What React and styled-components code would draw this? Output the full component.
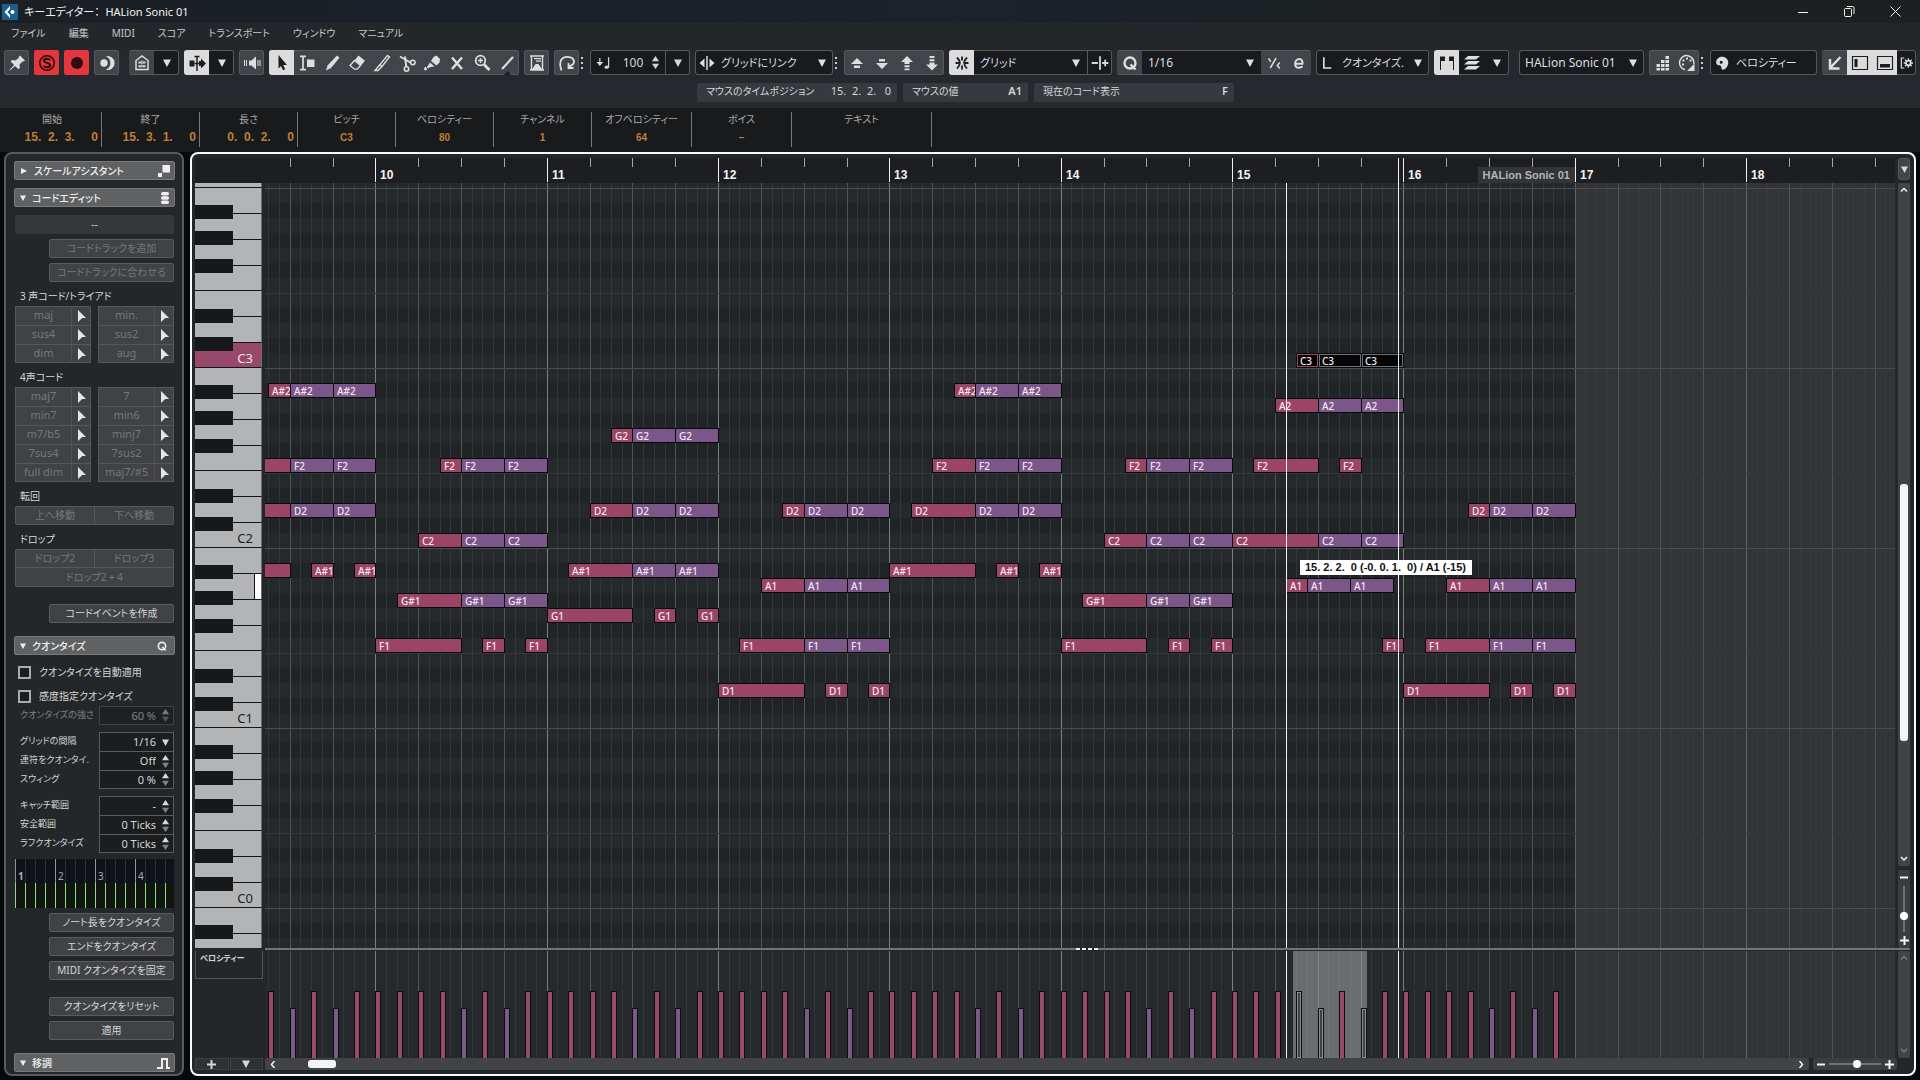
// src/App.jsx
import React, { useState } from 'react';
import styled, { createGlobalStyle, css } from 'styled-components';

const GlobalStyle = createGlobalStyle`
  * {
    box-sizing: border-box;
  }
  body {
    margin: 0;
    background: #060809;
    color: #d4d6d8;
    font-family: "Noto Sans", "Noto Sans CJK JP", sans-serif;
    font-feature-settings: "palt";
    font-size: 11px;
    line-height: 16px;
  }
  button, input, select {
    margin: 0;
    padding: 0;
    border: none;
    border-radius: 0;
    background: none;
    color: inherit;
    font: inherit;
    font-feature-settings: inherit;
    outline: none;
  }
  svg {
    display: block;
    flex: none;
  }
`;

const Page = styled.div`
  display: flex;
  flex-direction: column;
  height: 100vh;
  overflow: hidden;
`;

/* ---------- title and menu ---------- */

const TitleBar = styled.header`
  display: flex;
  align-items: center;
  gap: 6px;
  height: 23px;
  padding: 0 12px 0 2px;
  background: linear-gradient(90deg, #1a1f24, #1b222c 50%, #1c2020 75%);
`;

const Title = styled.h1`
  flex: 1;
  margin: 0;
  font-size: 11px;
  font-weight: 400;
  white-space: pre;
  color: #f2f2f2;
`;

const WindowButton = styled.button`
  display: grid;
  place-items: center;
  width: 46px;
  height: 22px;
  color: #f2f2f2;
`;

const WindowButtons = styled.div`
  display: flex;
  margin-right: -10px;
`;

const MenuBar = styled.nav`
  display: flex;
  gap: 23px;
  height: 27px;
  padding: 2px 11px 0;
  background: #24272a;
`;

const MenuItem = styled.button`
  height: 16px;
  font-size: 10px;
  white-space: nowrap;
  color: #c4c7ca;
`;

/* ---------- toolbar ---------- */

const Toolbar = styled.div`
  display: flex;
  gap: 5px;
  height: 33px;
  padding: 0 4px 8px;
  background: #25282c;
`;

const Group = styled.div`
  display: flex;
  flex: ${(p) => (p.$grow ? '1 1 0' : 'none')};
  width: ${(p) => (p.$width ? `${p.$width}px` : 'auto')};
  min-width: 0;
  height: 25px;
  margin-left: ${(p) => (p.$apart ? '5px' : '0')};
  border-radius: 3px;
  overflow: hidden;
  background: ${(p) => (p.$dark ? '#181a1d' : '#414448')};
  box-shadow: inset 0 0 0 1px #55585c;
`;

const tones = {
  on: css`
    background: #dcdcdc;
    color: #1c1d1f;
  `,
  red: css`
    background: #e4373d;
    color: #2c0c0e;
  `,
  raised: css`
    background: #414448;
    box-shadow: inset 0 1px #55585c, inset 0 -1px #55585c;
  `,
};

const ToolButton = styled.button`
  display: grid;
  place-items: center;
  flex: ${(p) => (p.$grow ? 1 : 'none')};
  width: 25px;
  min-width: 0;
  height: 25px;
  color: #dcdee0;
  ${(p) => tones[p.$tone]}
`;

const Grip = styled.span`
  width: 6px;
  height: 25px;
  flex: none;
  margin-left: -5px;
  padding: 7px 2px;

  &::before {
    content: "";
    display: block;
    width: 2px;
    height: 12px;
    background: repeating-linear-gradient(#c8cacc 0 2px, transparent 2px 5px);
  }
`;

const Picker = styled.label`
  display: flex;
  flex: 1;
  align-items: center;
  min-width: 0;
  gap: 4px;
  padding: 0 7px 0 ${(p) => p.$indent || 6}px;
  color: #dcdee0;

  select {
    flex: 1;
    min-width: 0;
    appearance: none;
    font-size: ${(p) => (p.$kana ? 11 : 12)}px;
  }
`;

const NumberBox = styled.label`
  display: flex;
  flex: 1;
  align-items: center;
  padding: 0 6px 0 4px;

  input {
    flex: 1;
    width: 20px;
    min-width: 0;
    text-align: center;
    font-size: 12px;
  }
`;

const SplitCell = styled.button`
  display: grid;
  place-items: center;
  width: 25px;
  height: 25px;
  border-left: 1px solid #55585c;
`;

const StatusLine = styled.div`
  display: flex;
  justify-content: center;
  gap: 6px;
  height: 25px;
  padding: 0 0 6px 11px;
  background: #25282c;
`;

const Pill = styled.div`
  display: flex;
  justify-content: space-between;
  width: ${(p) => p.$width}px;
  padding: 0 6px 0 9px;
  border-radius: 2px;
  background: #36393d;
  font-size: 10px;
  white-space: pre;

  b {
    font-size: 11px;
    font-weight: ${(p) => (p.$plain ? 400 : 600)};
  }
`;

/* ---------- info line ---------- */

const InfoLine = styled.div`
  display: flex;
  height: 44px;
  padding: 4px 0 5px 3px;
  background: #191a1c;
`;

const InfoField = styled.label`
  display: flex;
  flex-direction: column;
  align-items: stretch;
  width: ${(p) => p.$width}px;
  border-right: 1px solid #77797b;
  padding: 0 3px;
  font-size: 10px;
  line-height: 14px;
  text-align: center;
  color: #a7a9ab;

  input {
    width: 100%;
    height: 18px;
    margin-top: 2px;
    text-align: ${(p) => (p.$time ? 'right' : 'center')};
    font-family: "Liberation Sans", sans-serif;
    font-size: ${(p) => (p.$time ? 12 : 10)}px;
    font-weight: 700;
    color: #bf7f34;
  }
`;

/* ---------- inspector ---------- */

const Workspace = styled.main`
  display: flex;
  flex: 1;
  gap: 6px;
  min-height: 0;
  padding: 0 4px 4px;
`;

const Inspector = styled.aside`
  display: flex;
  flex-direction: column;
  width: 180px;
  flex: none;
  padding: 7px 6px 7px 7px;
  border: 2px solid #585b5e;
  border-radius: 8px;
  background: #23272a;
  font-size: 10px;
  overflow: hidden;
`;

const SectionHead = styled.button`
  display: flex;
  flex: none;
  align-items: center;
  gap: 6px;
  height: 19px;
  margin: 0 1px;
  margin-bottom: ${(p) => p.$gap || 8}px;
  padding: 0 4px 0 5px;
  border: 1px solid #77797b;
  border-radius: 2px;
  background: #5f6163;
  color: #eeeeee;
  font-weight: 500;

  span {
    flex: 1;
    text-align: left;
  }
`;

const SectionBody = styled.div`
  display: flex;
  flex-direction: column;
  margin: 0 2px;
`;

const ChordName = styled.output`
  height: 19px;
  margin-bottom: 5px;
  border-radius: 2px;
  background: #35373b;
  line-height: 18px;
  text-align: center;
`;

const SideButton = styled.button`
  flex: none;
  height: 19px;
  margin: 0 0 ${(p) => p.$gap || 5}px 34px;
  border: 1px solid #5a5d60;
  border-radius: 2px;
  background: #404246;
  line-height: 15px;
  white-space: nowrap;

  &:disabled {
    color: #75787b;
  }
`;

const SubTitle = styled.h2`
  height: 16px;
  margin: 0 0 3px;
  padding-left: 5px;
  font-size: 10px;
  font-weight: 400;
  line-height: 18px;
`;

const ChordColumns = styled.div`
  display: grid;
  grid-template-columns: 1fr 1fr;
  column-gap: 7px;
  margin-bottom: 5px;
`;

const ChordRow = styled.div`
  display: flex;
  height: 19px;
  border: 1px solid #55585b;
  border-bottom-width: ${(p) => (p.$last ? '1px' : '0')};
  background: #404246;
  font-size: 11px;
`;

const ChordButton = styled.button`
  flex: 1;
  padding-bottom: 2px;
  line-height: 14px;
  border-right: 1px solid #4d5053;

  &:disabled {
    color: #75787b;
  }
`;

const DragButton = styled.button`
  display: grid;
  place-items: center;
  width: 18px;
  color: #e4e5e6;
`;

const MoveGrid = styled.div`
  display: grid;
  grid-template-columns: 1fr 1fr;
  gap: 1px;
  margin-bottom: ${(p) => p.$gap}px;
  border: 1px solid #55585b;
  border-radius: 2px;
  background: #55585b;
`;

const MoveButton = styled.button`
  grid-column: ${(p) => (p.$wide ? '1 / -1' : 'auto')};
  height: ${(p) => (p.$wide ? 18 : 17)}px;
  background: #404246;
  line-height: 15px;

  &:disabled {
    color: #75787b;
  }
`;

const CheckRow = styled.label`
  display: flex;
  align-items: center;
  gap: 8px;
  height: 20px;
  margin-bottom: ${(p) => p.$gap}px;
  padding-left: 3px;

  input {
    appearance: none;
    width: 13px;
    height: 13px;
    border: 2px solid #a9abad;
    background: #1b1d1f;
  }
`;

const FieldGroup = styled.div`
  margin-bottom: ${(p) => p.$gap || 7}px;
  opacity: ${(p) => (p.$dim ? 0.5 : 1)};
`;

const Field = styled.label`
  display: flex;
  height: 19px;
  padding-left: 5px;
  font-size: 9px;
  line-height: 18px;
  white-space: nowrap;

  > span:first-child {
    flex: 1;
    min-width: 0;
  }
`;

const FieldBox = styled.span`
  display: flex;
  align-items: center;
  width: 75px;
  height: 19px;
  padding-right: 4px;
  border: 1px solid #5a5d60;
  border-bottom-width: ${(p) => (p.$last ? '1px' : '0')};
  background: #1b1d1f;
  font-size: 11px;

  input, select {
    flex: 1;
    width: 40px;
    height: 16px;
    min-width: 0;
    padding: 0 6px 1px 0;
    appearance: none;
    line-height: 15px;
    text-align: right;
    text-align-last: right;
  }
`;

const QuantizeGrid = styled.div`
  flex: none;
  height: 49px;
  margin-bottom: 5px;
  background: linear-gradient(#0f1317 50%, #10160f 50%);
`;

/* ---------- editor ---------- */

const Editor = styled.section`
  display: grid;
  flex: 1;
  min-width: 0;
  grid-template-columns: 67px 1fr 12px;
  grid-template-rows: 25px 1fr 3px 107px 12px;
  column-gap: 3px;
  padding: 4px 4px 4px 3px;
  border: 2px solid #fafafa;
  border-radius: 8px;
  background: #23272a;
`;

const RulerCorner = styled.div`
  margin-right: -3px;
  background: #1d1e22;
`;

const Ruler = styled.div`
  position: relative;
  overflow: hidden;
  background: #1d1e22;
`;

const BarNumber = styled.span`
  position: absolute;
  top: 9px;
  font-family: "Liberation Sans", sans-serif;
  font-size: 12px;
  font-weight: 700;
  color: #f4f4f4;
`;

const PartTag = styled.span`
  position: absolute;
  top: 9px;
  height: 16px;
  padding-right: 5px;
  background: #323437;
  font-family: "Liberation Sans", sans-serif;
  font-size: 11px;
  font-weight: 700;
  text-align: right;
  white-space: nowrap;
  color: #b4b6b8;
`;

const RulerMenu = styled.button`
  display: grid;
  place-items: center;
  height: 22px;
  border: 1px solid #56595c;
  border-radius: 3px;
  background: #414448;
`;

const Keyboard = styled.div`
  display: flex;
  flex-direction: column;
  min-height: 0;
  overflow: hidden;
  background: #b2b4b6;
`;

const Octave = styled.div`
  position: relative;
  flex: none;
  height: 180px;

  &:first-child {
    margin-top: -175px;
  }
`;

const WhiteKey = styled.div`
  display: flex;
  align-items: flex-end;
  justify-content: flex-end;
  height: ${(p) => p.$height}px;
  padding-right: 8px;
  border-bottom: 1px solid #141517;
  border-right: 1px solid #6c6e70;
  background: ${(p) => (p.$active ? '#984868' : '#b2b4b6')};
  color: ${(p) => (p.$active ? '#f0e4ea' : '#1e2022')};
  font-size: 13px;
  line-height: 17px;
`;

const KeyMarker = styled.i`
  align-self: stretch;
  width: 7px;
  margin-right: -8px;
  border-left: 1px solid #141517;
  background: #ffffff;
`;

const BlackKey = styled.div`
  position: absolute;
  left: 0;
  width: 38px;
  height: 14px;
  background: #17181a;
`;

const Roll = styled.div`
  position: relative;
  min-height: 0;
  overflow: hidden;
`;

const GridSvg = styled.svg`
  position: absolute;
  inset: 0;
  width: 100%;
  height: 100%;
  shape-rendering: crispEdges;
`;

const noteColors = {
  pink: css`background: #9a4566;`,
  purple: css`background: #7b5688;`,
  picked: css`
    background: #050505;
    box-shadow: inset 0 0 0 1px #6d7280;
  `,
  pickedPink: css`
    background: #050505;
    box-shadow: inset 0 0 0 1px #9a4a5a;
  `,
};

const NoteBox = styled.div`
  position: absolute;
  height: 15px;
  padding-left: 3px;
  border: 1px solid #08090a;
  overflow: hidden;
  font-size: 10px;
  font-weight: 500;
  line-height: 14px;
  white-space: nowrap;
  color: #f3e6ee;
  ${(p) => noteColors[p.$kind]}
`;

const Cursor = styled.i`
  position: absolute;
  top: 0;
  bottom: 0;
  width: 1px;
  background: #f4f4f4;
`;

const DragTip = styled.div`
  position: absolute;
  top: 377px;
  padding: 0 6px 0 5px;
  background: #ffffff;
  font-family: "Liberation Sans", sans-serif;
  font-size: 11px;
  font-weight: 700;
  line-height: 15px;
  white-space: pre;
  color: #111111;
`;

const ScrollColumn = styled.div`
  display: flex;
  flex-direction: column;
  align-items: center;
  min-height: 0;
`;

const ScrollTrack = styled.div`
  display: flex;
  flex-direction: ${(p) => (p.$row ? 'row' : 'column')};
  flex: 1;
  align-items: center;
  justify-content: space-between;
  align-self: stretch;
  min-height: 0;
  padding: ${(p) => (p.$row ? '0 4px' : '4px 0')};
  border-radius: 2px;
  background: #414346;
  color: ${(p) => (p.$dim ? '#75787a' : '#f4f4f4')};
`;

const Gap = styled.span`
  flex: ${(p) => p.$share} 1 0;
`;

const Thumb = styled.span`
  flex: ${(p) => p.$share} 1 0;
  width: ${(p) => (p.$row ? 'auto' : '8px')};
  height: ${(p) => (p.$row ? '8px' : 'auto')};
  border-radius: 3px;
  background: #f2f4f6;
`;

const ZoomBox = styled.div`
  display: flex;
  flex-direction: ${(p) => (p.$row ? 'row' : 'column')};
  align-items: center;
  justify-content: center;
  align-self: stretch;
  gap: 4px;
  width: ${(p) => (p.$row ? '84px' : 'auto')};
  height: ${(p) => (p.$row ? '12px' : '78px')};
  margin: ${(p) => (p.$row ? '0 0 0 4px' : '4px 0 0')};
  border-radius: 2px;
  background: #3b3e41;
  color: #f4f4f4;
`;

const ZoomSlider = styled.input`
  appearance: none;
  writing-mode: ${(p) => (p.$row ? 'horizontal-tb' : 'vertical-lr')};
  width: ${(p) => (p.$row ? '52px' : '8px')};
  height: ${(p) => (p.$row ? '8px' : '46px')};
  background: linear-gradient(#6f7275, #6f7275) center / ${(p) => (p.$row ? '100% 2px' : '2px 100%')} no-repeat;

  &::-webkit-slider-thumb {
    appearance: none;
    width: 8px;
    height: 8px;
    border-radius: 4px;
    background: #ffffff;
  }
`;

const Splitter = styled.div`
  display: grid;
  place-items: start center;
  grid-column: 2 / -1;
  height: 2px;
  background: #727577;

  &::before {
    content: "";
    width: 22px;
    height: 2px;
    margin-right: 2px;
    background: repeating-linear-gradient(90deg, #f0f0f0 0 4px, #23272a 4px 6px);
  }
`;

const LaneHead = styled.div`
  height: 28px;
  margin-right: -1px;
  padding: 1px 4px;
  border: 1px solid #54575a;
  border-top: none;
  font-size: 8px;
  line-height: 11px;
  font-weight: 700;
`;

const LaneButtons = styled.div`
  display: grid;
  grid-template-columns: 1fr 1fr;
  gap: 1px;
  margin-right: -1px;

  button {
    display: grid;
    place-items: center;
    background: #2d3134;
    box-shadow: inset 0 0 0 1px #3c4043;
  }
`;

const HorizontalScroll = styled.div`
  display: flex;
  grid-column: 2 / -1;
  padding-right: 13px;
`;

const LaneSelection = styled.div`
  position: absolute;
  top: 0;
  bottom: 0;
  background: rgba(220, 222, 224, 0.38);
`;

const velocityColors = {
  pink: '#96496a',
  purple: '#7a5b87',
  hollow: '#3f4144',
};

const VelocityBar = styled.div`
  position: absolute;
  bottom: 0;
  width: 6px;
  border: 1px solid #0c0d0e;
  border-bottom: none;
  background: ${(p) => velocityColors[p.$kind]};
  box-shadow: ${(p) => (p.$kind === 'hollow' ? 'inset 0 0 0 1px #8a8c8f' : 'none')};
`;

/* ---------- timeline data ---------- */

const FIRST_BAR = 9;
const LAST_BAR = 19;
const PART_END = 17;
const BAR_WIDTH = 514 / 3;
const ROW = 15;
const PITCHES = ['C', 'C#', 'D', 'D#', 'E', 'F', 'F#', 'G', 'G#', 'A', 'A#', 'B'];

const xOf = (bar, step = 0) => Math.round(110.4 + (bar - 10 + step / 16) * BAR_WIDTH);

const yOf = (name) => {
  const pitch = name.slice(0, -1);
  const octave = Number(name.slice(-1));
  return -10 + ((4 - octave) * 12 - PITCHES.indexOf(pitch)) * ROW;
};

// each bar is an arpeggio: root, then three voices entering one eighth later
const arpeggios = [
  [9, ['A#1', 'D2', 'F2', 'A#2']],
  [10, ['F1', 'G#1', 'C2', 'F2']],
  [11, ['G1', 'A#1', 'D2', 'G2']],
  [12, ['D1', 'F1', 'A1', 'D2']],
  [13, ['A#1', 'D2', 'F2', 'A#2']],
  [14, ['F1', 'G#1', 'C2', 'F2']],
  [16, ['D1', 'F1', 'A1', 'D2']],
];

const notes = arpeggios.flatMap(([bar, [root, ...voices]]) => [
  [bar, root, 0, 8, 'pink'],
  [bar, root, 10, 12, 'pink'],
  [bar, root, 14, 16, 'pink'],
  ...voices.flatMap((name, i) => [
    [bar, name, 2 + i * 2, 8, 'pink'],
    [bar, name, 8, 12, 'purple'],
    [bar, name, 12, 16, 'purple'],
  ]),
]).concat([
  [15, 'C2', 0, 8, 'pink'],
  [15, 'C2', 8, 12, 'purple'],
  [15, 'C2', 12, 16, 'purple'],
  [15, 'F2', 2, 8, 'pink'],
  [15, 'F2', 10, 12, 'pink'],
  [15, 'A2', 4, 8, 'pink'],
  [15, 'A2', 8, 12, 'purple'],
  [15, 'A2', 12, 16, 'purple'],
  [15, 'C3', 6, 8, 'pickedPink'],
  [15, 'C3', 8, 12, 'picked'],
  [15, 'C3', 12, 16, 'picked'],
  [15, 'A1', 5, 7, 'pink'],
  [15, 'A1', 7, 11, 'purple'],
  [15, 'A1', 11, 15, 'purple'],
  [15, 'F1', 14, 16, 'pink'],
]);

const CURSOR_X = xOf(15, 5);
const PLAYHEAD_X = xOf(15, 15) + 5;

const range = (from, to) => Array.from({ length: to - from }, (_, i) => from + i);

const velocities = range(FIRST_BAR, PART_END).flatMap((bar) =>
  [0, 2, 4, 6, 8, 10, 12, 14].map((step) => {
    const soft = step === 8 || step === 12;
    const picked = bar === 15 && (step === 6 || soft);
    return { bar, step, height: soft ? 50 : 67, kind: picked ? 'hollow' : soft ? 'purple' : 'pink' };
  })
);

/* ---------- icons ---------- */

const Caret = ({ size = 8 }) => (
  <svg width={size} height={size} viewBox="0 0 8 8" fill="currentColor"><path d="M0 0.5h8L4 8z" /></svg>
);

const UpDown = ({ tall, dim }) => (
  <svg width="7" height={tall ? 17 : 13} viewBox="0 0 7 13" fill="currentColor">
    <path d="M3.5 0L7 5.2H0z" />
    <path d="M3.5 13L7 7.8H0z" opacity={dim ? 0.55 : 1} />
  </svg>
);

const Plus = () => (
  <svg width="9" height="9" viewBox="0 0 9 9" stroke="currentColor" strokeWidth="2"><path d="M4.5 0v9M0 4.5h9" /></svg>
);

const Minus = () => (
  <svg width="8" height="9" viewBox="0 0 8 9" stroke="currentColor" strokeWidth="2"><path d="M0 4.5h8" /></svg>
);

const chevrons = {
  up: 'M1 4.5L4 1.5l3 3',
  down: 'M1 2l3 3 3-3',
  left: 'M5.5 0L2.500 3.500l3 3.500',
  right: 'M2.500 0l3 3.500-3 3.500',
};

const Chevron = ({ to }) => (
  <svg width="8" height="7" viewBox="0 0 8 7" fill="none" stroke="currentColor" strokeWidth="1.500"><path d={chevrons[to]} /></svg>
);

const Pointer = () => (
  <svg width="9" height="12" viewBox="0 0 9 12" fill="currentColor"><path d="M1 0l8 8H5.200L1 12z" /></svg>
);

const glyphs = {
  pin: <path fill="currentColor" d="M15 4.500l5 5-1.200 1-1-.2-3.300 3.300.4 3.200-1.500 1.500-3.400-3.400-5 4.600-.5-.5 4.600-5-3.400-3.400 1.500-1.500 3.200.4L13.900 6.700l-.2-1z" />,
  solo: (
    <>
      <circle cx="12" cy="12" r="7.200" stroke="currentColor" strokeWidth="1.600" />
      <path d="M15 9.300c-.5-1-1.600-1.500-3-1.500-1.700 0-2.900.7-2.900 2 0 2.900 6 1.300 6 4.300 0 1.400-1.300 2.200-3.100 2.200-1.500 0-2.700-.6-3.200-1.700" stroke="currentColor" strokeWidth="2" />
    </>
  ),
  record: <circle cx="12" cy="12" r="6" fill="currentColor" />,
  feedback: (
    <>
      <path fill="currentColor" d="M11 5.200A7 7 0 1 1 11 18.800A7.500 7.500 0 0 0 11 5.200z" />
      <circle cx="9" cy="12" r="3.700" fill="currentColor" />
    </>
  ),
  house: (
    <>
      <path d="M6 18.500v-9L12 5l6 4.500v9z" stroke="currentColor" strokeWidth="1.500" />
      <path d="M8.500 11.500h7M8.500 15.300h7" stroke="currentColor" strokeWidth="2" strokeDasharray="3 1" />
      <path d="M12 9.500v7.500" stroke="currentColor" strokeWidth="1.200" strokeDasharray="1.500 1" />
    </>
  ),
  autoscroll: (
    <>
      <path fill="currentColor" d="M4.500 9.500h5v6h-5zM14 10h2V7.500l5 5-5 5V15h-2z" />
      <path d="M12 6v14M9.500 5.500h5M9.500 12.500h5" stroke="currentColor" strokeWidth="1.500" />
    </>
  ),
  speaker: (
    <>
      <path fill="currentColor" d="M9 9.500h2.500L16 5.500v13l-4.500-4H9z" />
      <path d="M4.500 9v6M6.500 9v6M18 9v6M20 9v6" stroke="currentColor" />
    </>
  ),
  arrow: <path fill="currentColor" d="M8.500 4l8.500 10h-3.800l2 4.200-2.200 1L11 15l-2.500 2.500z" />,
  rangeTool: (
    <>
      <path d="M8 6v12M5 5.300h6M5 18.700h6" stroke="currentColor" strokeWidth="1.700" />
      <path fill="currentColor" d="M12 8.500h7.500V16H12z" />
    </>
  ),
  pencil: <path fill="currentColor" d="M17 4.500l2.500 2.300-8.500 10.200-5 2.500 1.500-5z" />,
  eraser: (
    <>
      <path fill="currentColor" d="M13.500 4.500l6.500 5.200-4 4.800-6.300-5.300z" />
      <path d="M9.500 9.500l6 5-3.200 3.700H9.500L5 14.500z" stroke="currentColor" strokeWidth="1.300" />
    </>
  ),
  knife: <path d="M17.500 4.500l2 1.500-7.500 9.500-2.200-1.700zM9.800 13.800L5 19.500h3l4-4" stroke="currentColor" strokeWidth="1.400" />,
  scissors: (
    <>
      <path d="M5 5.500l10.500 6M10 5.500l1.300 10.500" stroke="currentColor" strokeWidth="2" />
      <circle cx="17.800" cy="11.500" r="2.200" stroke="currentColor" strokeWidth="1.600" />
      <circle cx="11.500" cy="18" r="2.200" stroke="currentColor" strokeWidth="1.600" />
    </>
  ),
  glue: (
    <>
      <path fill="currentColor" d="M13.500 6l3-1.500 3.500 3.500-.5 3.500-3 3-5.500-4.500z" />
      <path fill="currentColor" d="M10 11.500l4.500 4-4 .5-2.500 1.500-1-1.500z" />
      <path fill="currentColor" d="M5.500 15.500c2 2 1.800 3.800 0 4-1.800-.2-2-2 0-4z" />
    </>
  ),
  cross: <path d="M7 6.500l10 11.500M17 6.500L7 18" stroke="currentColor" strokeWidth="2.500" />,
  zoom: (
    <>
      <circle cx="10.500" cy="9.500" r="4.800" stroke="currentColor" strokeWidth="1.800" />
      <path d="M14 13.500l5.500 5.500" stroke="currentColor" strokeWidth="3" />
      <path d="M8 9.500h5M10.500 7v5" stroke="currentColor" strokeWidth="1.500" />
    </>
  ),
  line: (
    <>
      <path d="M18 6L7 18" stroke="currentColor" strokeWidth="2.200" />
      <path fill="#1c1e20" d="M9 24l3.500-4 3.500 4z" />
    </>
  ),
  stage: (
    <>
      <path d="M5 5h14M5 19h14M6.500 5v14M17.500 5v14" stroke="currentColor" strokeWidth="1.400" />
      <path fill="currentColor" d="M9 7h7v1.300H9zM11 9.500h5v1.300h-5zM6.500 19l4-6h3l4 6z" />
    </>
  ),
  loop: <path d="M6.500 19.500C3.500 11 6 5.800 12.500 5.800c5.500 0 8 4 5.500 7.500l-4.500 3M13.500 12v5h5" stroke="currentColor" strokeWidth="1.800" />,
  velocity: (
    <>
      <path d="M7 6v8M4.500 11.500L7 14.500l2.500-3z" stroke="currentColor" strokeWidth="1.500" fill="currentColor" />
      <path d="M17.500 5v12" stroke="currentColor" strokeWidth="1.500" />
      <ellipse cx="15.200" cy="17" rx="2.600" ry="2" fill="currentColor" />
    </>
  ),
  lengthLink: (
    <>
      <path d="M12 3.500v17" stroke="currentColor" strokeWidth="1.800" />
      <path fill="currentColor" d="M3 12l6-5.500v11zM21 12l-6-5.500v11z" />
    </>
  ),
  nudgeUp: <path fill="currentColor" d="M12 7l6 6H6zM9 14.500h6v2.500H9z" />,
  nudgeDown: <path fill="currentColor" d="M12 18l6-6H6zM9 8h6v2.500H9z" />,
  octaveUp: <path fill="currentColor" d="M12 5l6 6h-3.500v2h-5v-2H6zM9.500 14.200h5v2h-5zM9.500 17.400h5v1.800h-5z" />,
  octaveDown: <path fill="currentColor" d="M12 19.500l6-6h-3.500v-2h-5v2H6zM9.500 8.300h5v2h-5zM9.500 5h5v2h-5z" />,
  snap: <path d="M12 5.500v4M12 14.500v4M7 6.500c1.500 1.500 2.700 3.300 2.900 5.500-.2 2.200-1.400 4-2.900 5.500M17 6.500c-1.500 1.500-2.700 3.300-2.900 5.500.2 2.200 1.400 4 2.900 5.500M5.500 12h3.500M15 12h3.500" stroke="currentColor" strokeWidth="1.800" />,
  snapOffset: <path d="M2 12h7.500M12 4v16M14.500 12H22M18.200 8.200v7.600" stroke="currentColor" strokeWidth="2.200" />,
  quantize: (
    <>
      <circle cx="12" cy="12" r="5.500" stroke="currentColor" strokeWidth="2.400" />
      <path d="M12.500 13.500l5 5" stroke="currentColor" strokeWidth="2.400" />
    </>
  ),
  iterative: (
    <>
      <path d="M14.500 6L7.500 18M5.500 6.500l2.500 4M19 11.500l-3 3.500 3 3.500" stroke="currentColor" strokeWidth="1.800" />
      <circle cx="16" cy="15" r=".8" fill="currentColor" />
    </>
  ),
  editQ: <path d="M7.500 12.800h8.700c.3-3.500-1.200-5.600-3.800-5.600-3 0-5 2.500-5 5.600 0 3 1.800 4.900 4.500 4.900 1.800 0 3.200-.7 4.200-2" stroke="currentColor" strokeWidth="2.400" />,
  lengthQ: <path d="M7 5v13h9" stroke="currentColor" strokeWidth="2" />,
  parts: (
    <>
      <path d="M5.500 6v13M18.500 6v13" stroke="currentColor" />
      <path fill="currentColor" d="M5 5.500h5v4.500H5zM14 5.500h5v4.500h-5z" />
    </>
  ),
  layers: <path fill="currentColor" d="M8 5h12l-4 3.500H4zM8 10h12l-4 3.500H4zM8 15h12l-4 3.500H4z" />,
  steps: <path fill="currentColor" d="M15.500 5H19v3h-3.500zM11 9h3.500v3H11zM15.500 9H19v3h-3.500zM6.500 13H10v3H6.500zM11 13h3.500v3H11zM15.500 13H19v3h-3.500zM6.500 17H10v2.500H6.500zM11 17h3.500v2.500H11zM15.500 17H19v2.500h-3.500z" />,
  midiIn: (
    <>
      <path d="M18.800 13A7.200 7.200 0 1 0 10 18.800" stroke="currentColor" strokeWidth="1.500" />
      <path fill="currentColor" d="M11 6.500h2v2h-2zM7.500 8.500h2v2h-2zM14.500 8.500h2v2h-2zM7 12.500h2v2H7zM19.500 12.500V20H12z" />
    </>
  ),
  palette: <path fill="currentColor" fillRule="evenodd" d="M12 4.500c4.500 0 7.500 3 7.500 7s-3 8.500-6.500 8.500c-2.500 0-1-3.500-2.500-4.500S5 15.500 5 11.500s3-7 7-7zM11 13a1.800 1.800 0 1 0 0-3.600 1.800 1.800 0 0 0 0 3.600z" />,
  openBelow: <path d="M17.500 6L8 16M7 8v9.500h9.500" stroke="currentColor" strokeWidth="2.500" />,
  leftZone: (
    <>
      <path d="M4.500 5.500h15v13h-15z" stroke="currentColor" strokeWidth="1.200" />
      <path fill="currentColor" d="M6.500 8h3v8h-3z" />
    </>
  ),
  lowerZone: (
    <>
      <path d="M4.500 5.500h15v13h-15z" stroke="currentColor" strokeWidth="1.200" />
      <path fill="currentColor" d="M7 13h10v3.500H7z" />
    </>
  ),
  gear: (
    <>
      <path d="M8 4.500H3.500v15H8" stroke="currentColor" strokeWidth="1.800" />
      <circle cx="14" cy="12" r="3.500" stroke="currentColor" strokeWidth="2.600" />
      <path d="M14 5v3M14 16v3M7 12h3M18 12h3M9 7l2 2M17 15l2 2M19 7l-2 2M11 15l-2 2" stroke="currentColor" strokeWidth="2" />
    </>
  ),
};

const Glyph = ({ name, size = 24 }) => (
  <svg width={size} height={size} viewBox="0 0 24 24" fill="none">{glyphs[name]}</svg>
);

/* ---------- parts ---------- */

const Tool = ({ icon, label, tone, grow, size }) => (
  <ToolButton type="button" aria-label={label || icon} $tone={tone} $grow={grow}>
    <Glyph name={icon} size={size} />
  </ToolButton>
);

const SelectField = ({ label, value, icon, indent, kana }) => (
  <Picker $indent={indent} $kana={kana}>
    {icon && <Glyph name={icon} size={20} />}
    <select aria-label={label} defaultValue={value}>
      <option>{value}</option>
    </select>
    <Caret />
  </Picker>
);

const editTools = ['rangeTool', 'pencil', 'eraser', 'knife', 'scissors', 'glue', 'cross', 'zoom', 'line'];

const MainToolbar = () => (
  <Toolbar>
    <Group><Tool icon="pin" /></Group>
    <Group><Tool icon="solo" tone="red" /></Group>
    <Group><Tool icon="record" tone="red" /></Group>
    <Group><Tool icon="feedback" /></Group>
    <Group $apart $dark>
      <Tool icon="house" tone="raised" />
      <ToolButton aria-label="house options"><Caret /></ToolButton>
    </Group>
    <Group $dark>
      <Tool icon="autoscroll" tone="on" />
      <ToolButton aria-label="autoscroll options"><Caret /></ToolButton>
    </Group>
    <Group><Tool icon="speaker" /></Group>
    <Group>
      <Tool icon="arrow" tone="on" />
      {editTools.map((icon) => <Tool key={icon} icon={icon} />)}
    </Group>
    <Group><Tool icon="stage" /></Group>
    <Group><Tool icon="loop" /></Group>
    <Grip />
    <Group $dark $width={100}>
      <NumberBox>
        <Glyph name="velocity" size={20} />
        <input aria-label="velocity" defaultValue="100" />
        <UpDown tall />
      </NumberBox>
      <SplitCell aria-label="velocity presets"><Caret /></SplitCell>
    </Group>
    <Group $dark $width={138}>
      <SelectField label="length" value="グリッドにリンク" icon="lengthLink" indent={2} kana />
    </Group>
    <Grip />
    <Group>
      <Tool icon="nudgeUp" />
      <Tool icon="nudgeDown" />
      <Tool icon="octaveUp" />
      <Tool icon="octaveDown" />
    </Group>
    <Group $dark $width={163}>
      <Tool icon="snap" tone="on" />
      <SelectField label="snap type" value="グリッド" kana />
      <SplitCell aria-label="snap offset"><Glyph name="snapOffset" size={20} /></SplitCell>
    </Group>
    <Group $dark $width={194}>
      <Tool icon="quantize" tone="raised" />
      <SelectField label="quantize" value="1/16" />
      <Tool icon="iterative" tone="raised" size={20} />
      <Tool icon="editQ" tone="raised" size={20} />
    </Group>
    <Group $dark $width={113}>
      <SelectField label="length quantize" value="クオンタイズ." icon="lengthQ" indent={2} kana />
    </Group>
    <Group $dark>
      <Tool icon="parts" tone="on" />
      <Tool icon="layers" />
      <ToolButton aria-label="part options"><Caret /></ToolButton>
    </Group>
    <Group $apart $dark $width={125}>
      <SelectField label="part" value="HALion Sonic 01" />
    </Group>
    <Group>
      <Tool icon="steps" />
      <Tool icon="midiIn" />
    </Group>
    <Grip />
    <Group $dark $grow>
      <Picker $indent={2} $kana>
        <Glyph name="palette" size={20} />
        <select aria-label="event colors" defaultValue="ベロシティー">
          <option>ベロシティー</option>
        </select>
      </Picker>
    </Group>
    <Group $dark $width={94}>
      <Tool icon="openBelow" tone="raised" />
      <Tool icon="leftZone" tone="on" />
      <Tool icon="lowerZone" tone="on" />
      <Tool icon="gear" grow size={16} />
    </Group>
  </Toolbar>
);

const infoFields = [
  { label: '開始', value: '15.  2.  3.     0', width: 99, time: true },
  { label: '終了', value: '15.  3.  1.     0', width: 98, time: true },
  { label: '長さ', value: '0.  0.  2.     0', width: 98, time: true },
  { label: 'ピッチ', value: 'C3', width: 98 },
  { label: 'ベロシティー', value: '80', width: 98 },
  { label: 'チャンネル', value: '1', width: 98 },
  { label: 'オフベロシティー', value: '64', width: 100 },
  { label: 'ボイス', value: '–', width: 100 },
  { label: 'テキスト', value: '', width: 140 },
];

const ChordPad = ({ names }) => (
  <ChordColumns>
    {names.map((name, i) => (
      <ChordRow key={name} $last={i >= names.length - 2}>
        <ChordButton disabled>{name}</ChordButton>
        <DragButton aria-label={`drag ${name}`}><Pointer /></DragButton>
      </ChordRow>
    ))}
  </ChordColumns>
);

const ValueField = ({ label, value, last, select }) => (
  <Field>
    <span>{label}</span>
    <FieldBox $last={last}>
      {select ? (
        <select defaultValue={value}><option>{value}</option></select>
      ) : (
        <input defaultValue={value} />
      )}
      {select ? <Caret size={7} /> : <UpDown dim />}
    </FieldBox>
  </Field>
);

const QuantizeView = () => (
  <QuantizeGrid>
    <svg width="159" height="49" fontFamily="Noto Sans" fontSize="10" shapeRendering="crispEdges">
      {range(0, 16).map((i) => (
        <g key={i}>
          <path d={`M${i * 10}.5 0V24`} stroke={i % 4 ? '#2b3034' : '#8f9296'} />
          <path d={`M${i * 10}.5 24V49`} stroke="#8fdc7c" />
        </g>
      ))}
      {range(0, 4).map((i) => (
        <text key={i} x={i * 40 + 3} y="21" fill="#a9abae" fontWeight={i ? 400 : 700}>{i + 1}</text>
      ))}
    </svg>
  </QuantizeGrid>
);

const InspectorPanel = () => {
  const [auto, setAuto] = useState(false);
  const [soft, setSoft] = useState(false);

  return (
    <Inspector>
      <SectionHead>
        <svg width="8" height="8" viewBox="0 0 8 8" fill="currentColor"><path d="M1 1l6 3-6 3z" /></svg>
        <span>スケールアシスタント</span>
        <svg width="12" height="12" viewBox="0 0 12 12" fill="currentColor"><path d="M4.500 0H12v7.500H4.500zM0 8h4v4H0z" /></svg>
      </SectionHead>
      <SectionHead>
        <Caret size={6} />
        <span>コードエディット</span>
        <svg width="10" height="12" viewBox="0 0 10 12" fill="currentColor">
          <rect x="1" width="8" height="3.500" rx="1.700" /><rect x="1" y="4.200" width="8" height="3.500" rx="1.700" /><rect x="1" y="8.400" width="8" height="3.500" rx="1.700" />
        </svg>
      </SectionHead>
      <SectionBody>
        <ChordName>--</ChordName>
        <SideButton disabled>コードトラックを追加</SideButton>
        <SideButton disabled>コードトラックに合わせる</SideButton>
        <SubTitle>3 声コード/トライアド</SubTitle>
        <ChordPad names={['maj', 'min.', 'sus4', 'sus2', 'dim', 'aug']} />
        <SubTitle>4声コード</SubTitle>
        <ChordPad names={['maj7', '7', 'min7', 'min6', 'm7/b5', 'minj7', '7sus4', '7sus2', 'full dim', 'maj7/#5']} />
        <SubTitle>転回</SubTitle>
        <MoveGrid $gap={5}>
          <MoveButton disabled>上へ移動</MoveButton>
          <MoveButton disabled>下へ移動</MoveButton>
        </MoveGrid>
        <SubTitle>ドロップ</SubTitle>
        <MoveGrid $gap={17}>
          <MoveButton disabled>ドロップ2</MoveButton>
          <MoveButton disabled>ドロップ3</MoveButton>
          <MoveButton $wide disabled>ドロップ2 + 4</MoveButton>
        </MoveGrid>
        <SideButton $gap={13}>コードイベントを作成</SideButton>
      </SectionBody>
      <SectionHead $gap={7}>
        <Caret size={6} />
        <span>クオンタイズ</span>
        <Glyph name="quantize" size={16} />
      </SectionHead>
      <SectionBody>
        <CheckRow $gap={4}>
          <input type="checkbox" checked={auto} onChange={(e) => setAuto(e.target.checked)} />
          クオンタイズを自動適用
        </CheckRow>
        <CheckRow $gap={0}>
          <input type="checkbox" checked={soft} onChange={(e) => setSoft(e.target.checked)} />
          感度指定クオンタイズ
        </CheckRow>
        <FieldGroup $dim>
          <ValueField label="クオンタイズの強さ" value="60 %" last />
        </FieldGroup>
        <FieldGroup>
          <ValueField label="グリッドの間隔" value="1/16" select />
          <ValueField label="連符をクオンタイ." value="Off" />
          <ValueField label="スウィング" value="0 %" last />
        </FieldGroup>
        <FieldGroup $gap={6}>
          <ValueField label="キャッチ範囲" value="-" />
          <ValueField label="安全範囲" value="0 Ticks" />
          <ValueField label="ラフクオンタイズ" value="0 Ticks" last />
        </FieldGroup>
        <QuantizeView />
        <SideButton>ノート長をクオンタイズ</SideButton>
        <SideButton>エンドをクオンタイズ</SideButton>
        <SideButton $gap={17}>MIDI クオンタイズを固定</SideButton>
        <SideButton>クオンタイズをリセット</SideButton>
        <SideButton $gap={13}>適用</SideButton>
      </SectionBody>
      <SectionHead>
        <Caret size={6} />
        <span>移調</span>
        <svg width="13" height="12" viewBox="0 0 13 12" fill="none" stroke="currentColor" strokeWidth="2"><path d="M0 11h5V2h5v9h3" /></svg>
      </SectionHead>
    </Inspector>
  );
};

const whiteKeys = [
  ['B', 26], ['A', 26], ['G', 26], ['F', 25], ['E', 26], ['D', 26], ['C', 25],
];
// distance of each black key from the top of its octave
const blackKeys = [17, 43, 71, 121, 149];

const PianoKeys = () => (
  <Keyboard>
    {[4, 3, 2, 1, 0, -1].map((octave) => (
      <Octave key={octave}>
        {whiteKeys.map(([name, height]) => (
          <WhiteKey key={name} $height={height} $active={name === 'C' && octave === 3}>
            {name === 'C' && octave >= 0 && `C${octave}`}
            {name === 'A' && octave === 1 && <KeyMarker />}
          </WhiteKey>
        ))}
        {blackKeys.map((top) => <BlackKey key={top} style={{ top }} />)}
      </Octave>
    ))}
  </Keyboard>
);

const VerticalLines = () => {
  const lines = [];
  for (let bar = FIRST_BAR; bar < LAST_BAR; bar += 1) {
    for (let step = 0; step < 16; step += 1) {
      const outside = bar >= PART_END;
      let stroke = outside ? '#37393c' : '#31363a';
      if (step % 4 === 0) stroke = outside ? '#4f5154' : '#505457';
      if (step === 0) stroke = outside ? '#626467' : '#7c7f81';
      lines.push(<path key={`${bar}-${step}`} d={`M${xOf(bar, step)}.5 0V4000`} stroke={stroke} />);
    }
  }
  return lines;
};

const NoteGrid = () => (
  <GridSvg>
    <rect width="100%" height="100%" fill="#25292c" />
    {range(0, 6).flatMap((octave) =>
      PITCHES.filter((p) => p.includes('#')).map((p) => (
        <rect key={`${octave}${p}`} y={yOf(`${p}4`) + octave * 180} width="100%" height={ROW} fill="#212427" />
      ))
    )}
    <rect x={xOf(PART_END)} width="100%" height="100%" fill="#333437" />
    <VerticalLines />
    {range(0, 6).map((octave) => (
      <g key={octave}>
        <path d={`M0 ${octave * 180 + 5}.5H4000`} stroke="#4a4e50" />
        <path d={`M0 ${octave * 180 + 110}.5H4000`} stroke="#34383a" />
      </g>
    ))}
  </GridSvg>
);

const TimeRuler = () => (
  <Ruler>
    <GridSvg>
      {range(FIRST_BAR, LAST_BAR).flatMap((bar) =>
        [0, 4, 8, 12].map((step) => (
          <path
            key={`${bar}-${step}`}
            d={`M${xOf(bar, step)}.5 0V${step ? 9 : 24}`}
            stroke={step ? '#a5a7a9' : '#f0f0f0'}
          />
        ))
      )}
    </GridSvg>
    <PartTag style={{ left: xOf(16, 7), width: xOf(17) - xOf(16, 7) }}>HALion Sonic 01</PartTag>
    {range(10, LAST_BAR).map((bar) => (
      <BarNumber key={bar} style={{ left: xOf(bar) + 5 }}>{bar}</BarNumber>
    ))}
    <Cursor style={{ left: PLAYHEAD_X }} />
  </Ruler>
);

const PianoRoll = () => (
  <Roll>
    <NoteGrid />
    {notes.map(([bar, name, from, to, kind]) => (
      <NoteBox
        key={`${bar}${name}${from}`}
        $kind={kind}
        style={{ left: xOf(bar, from), top: yOf(name), width: xOf(bar, to) - xOf(bar, from) + 1 }}
      >
        {name}
      </NoteBox>
    ))}
    <Cursor style={{ left: CURSOR_X }} />
    <Cursor style={{ left: PLAYHEAD_X }} />
    <DragTip style={{ left: CURSOR_X + 14 }}>{'15. 2. 2.  0 (-0. 0. 1.  0) / A1 (-15)'}</DragTip>
  </Roll>
);

const VelocityLane = () => (
  <Roll>
    <GridSvg>
      <rect width="100%" height="100%" fill="#25292c" />
      <rect x={xOf(PART_END)} width="100%" height="100%" fill="#333437" />
      <VerticalLines />
    </GridSvg>
    <LaneSelection style={{ left: xOf(15, 6) - 3, width: xOf(15, 12) - xOf(15, 6) + 9 }} />
    {velocities.map(({ bar, step, height, kind }) => (
      <VelocityBar key={`${bar}-${step}`} $kind={kind} style={{ left: xOf(bar, step), height }} />
    ))}
    <Cursor style={{ left: CURSOR_X }} />
    <Cursor style={{ left: PLAYHEAD_X }} />
  </Roll>
);

const KeyEditor = () => (
  <Editor>
    <RulerCorner />
    <TimeRuler />
    <RulerMenu aria-label="ruler format"><Caret size={7} /></RulerMenu>

    <PianoKeys />
    <PianoRoll />
    <ScrollColumn>
      <ScrollTrack>
        <Chevron to="up" />
        <Gap $share={289} />
        <Thumb $share={256} />
        <Gap $share={114} />
        <Chevron to="down" />
      </ScrollTrack>
      <ZoomBox>
        <Minus />
        <ZoomSlider type="range" aria-label="vertical zoom" defaultValue="68" />
        <Plus />
      </ZoomBox>
    </ScrollColumn>

    <span />
    <Splitter />

    <LaneHead>ベロシティー</LaneHead>
    <VelocityLane />
    <ScrollColumn>
      <ScrollTrack $dim>
        <Chevron to="up" />
        <Chevron to="down" />
      </ScrollTrack>
    </ScrollColumn>

    <LaneButtons>
      <button type="button" aria-label="add lane"><Plus /></button>
      <button type="button" aria-label="lane presets"><Caret /></button>
    </LaneButtons>
    <HorizontalScroll>
      <ScrollTrack $row>
        <Chevron to="left" />
        <Gap $share={31} />
        <Thumb $row $share={28} />
        <Gap $share={1460} />
        <Chevron to="right" />
      </ScrollTrack>
      <ZoomBox $row>
        <Minus />
        <ZoomSlider $row type="range" aria-label="horizontal zoom" defaultValue="55" />
        <Plus />
      </ZoomBox>
    </HorizontalScroll>
  </Editor>
);

const menus = ['ファイル', '編集', 'MIDI', 'スコア', 'トランスポート', 'ウィンドウ', 'マニュアル'];

const App = () => (
  <Page>
    <GlobalStyle />
    <TitleBar>
      <svg width="16" height="16" viewBox="0 0 16 16">
        <rect width="16" height="16" fill="#1b5f8c" />
        <path d="M8 2L2.500 8 8 14V11L5.500 8 8 5z" fill="#ffffff" />
        <circle cx="10.500" cy="8" r="2" fill="#ffffff" />
      </svg>
      <Title>キーエディター：  HALion Sonic 01</Title>
      <WindowButtons>
        <WindowButton aria-label="minimize"><svg width="10" height="10" stroke="currentColor"><path d="M0 5.500h10" /></svg></WindowButton>
        <WindowButton aria-label="restore">
          <svg width="11" height="11" fill="none" stroke="currentColor"><rect x=".5" y="2.500" width="7" height="8" rx="1" /><path d="M3 .5h5.500a1.500 1.500 0 0 1 1.500 1.500v6" /></svg>
        </WindowButton>
        <WindowButton aria-label="close"><svg width="11" height="11" stroke="currentColor"><path d="M.5.5l10 10M10.500.5l-10 10" /></svg></WindowButton>
      </WindowButtons>
    </TitleBar>
    <MenuBar>
      {menus.map((name) => <MenuItem key={name} type="button">{name}</MenuItem>)}
    </MenuBar>
    <MainToolbar />
    <StatusLine>
      <Pill $width={200} $plain>マウスのタイムポジション<b>{'15.  2.  2.   0'}</b></Pill>
      <Pill $width={125}>マウスの値<b>A1</b></Pill>
      <Pill $width={200}>現在のコード表示<b>F</b></Pill>
    </StatusLine>
    <InfoLine>
      {infoFields.map((f) => (
        <InfoField key={f.label} $width={f.width} $time={f.time}>
          {f.label}
          <input defaultValue={f.value} />
        </InfoField>
      ))}
    </InfoLine>
    <Workspace>
      <InspectorPanel />
      <KeyEditor />
    </Workspace>
  </Page>
);

export default App;
